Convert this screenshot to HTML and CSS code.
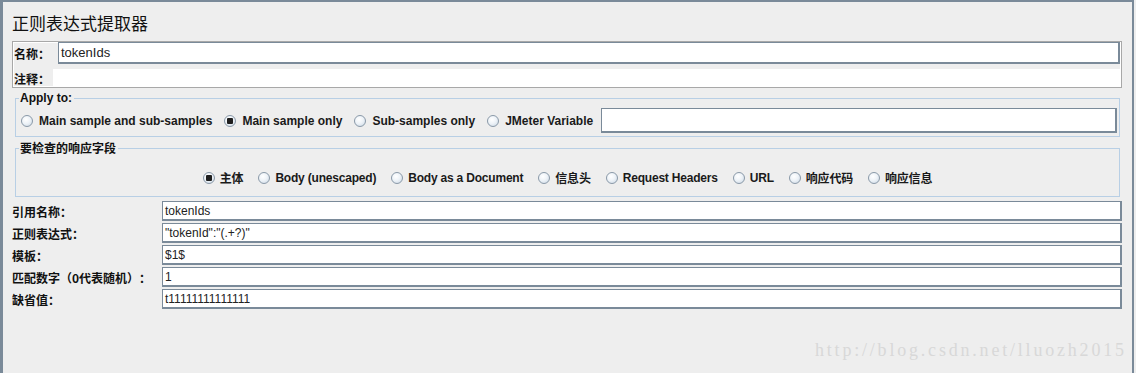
FILE: index.html
```html
<!DOCTYPE html>
<html lang="zh-CN">
<head>
    <meta charset="UTF-8">
    <title>正则表达式提取器</title>
    <link rel="stylesheet" href="styles.css">
</head>
<body>
    <div class="window">
        <div class="title">正则表达式提取器</div>

        <div class="name-box">
            <div class="name-row">
                <span class="label">名称：</span>
                <span class="field">tokenIds</span>
            </div>
            <div class="comment-row">
                <span class="label">注释：</span>
                <span class="blank"></span>
            </div>
        </div>

        <fieldset class="group apply">
            <legend>Apply to:</legend>
            <div class="radios">
                <label class="radio"><span class="dot"></span>Main sample and sub-samples</label>
                <label class="radio"><span class="dot on"></span>Main sample only</label>
                <label class="radio"><span class="dot"></span>Sub-samples only</label>
                <label class="radio"><span class="dot"></span>JMeter Variable</label>
                <span class="field var"></span>
            </div>
        </fieldset>

        <fieldset class="group response">
            <legend>要检查的响应字段</legend>
            <div class="radios centered">
                <label class="radio"><span class="dot on"></span>主体</label>
                <label class="radio"><span class="dot"></span>Body (unescaped)</label>
                <label class="radio"><span class="dot"></span>Body as a Document</label>
                <label class="radio"><span class="dot"></span>信息头</label>
                <label class="radio"><span class="dot"></span>Request Headers</label>
                <label class="radio"><span class="dot"></span>URL</label>
                <label class="radio"><span class="dot"></span>响应代码</label>
                <label class="radio"><span class="dot"></span>响应信息</label>
            </div>
        </fieldset>

        <div class="props">
            <span class="label">引用名称：</span>
            <span class="field">tokenIds</span>
            <span class="label">正则表达式：</span>
            <span class="field">"tokenId":"(.+?)"</span>
            <span class="label">模板：</span>
            <span class="field">$1$</span>
            <span class="label">匹配数字（0代表随机）：</span>
            <span class="field">1</span>
            <span class="label">缺省值：</span>
            <span class="field">t11111111111111</span>
        </div>

        <div class="watermark">http://blog.csdn.net/lluozh2015</div>
    </div>
</body>
</html>
```

FILE: styles.css
```css
body {
    margin: 0;
    background: #eeeeee;
    font-family: "Liberation Sans", Arial, "Noto Sans CJK SC", sans-serif;
    font-size: 12px;
    color: #222;
    text-spacing-trim: space-all;
}
.window {
    position: relative;
    box-sizing: border-box;
    width: 1134px;
    height: 373px;
    border-top: 2px solid #7a8a99;
    border-left: 3px solid #7a8a99;
    border-right: 2px solid #7a8a99;
    padding: 0 10px 0 9px;
}
.title {
    height: 39px;
    line-height: 42px;
    font-size: 17px;
    font-family: "Noto Sans CJK SC", sans-serif;
    color: #111;
}
/* name / comment box */
.name-box {
    box-sizing: border-box;
    height: 47px;
    border: 1px solid #a8a8a8;
    box-shadow: inset 0 0 0 1px #fff;
}
.label {
    font-family: "Noto Sans CJK SC", sans-serif;
    font-weight: bold;
    font-size: 12px;
    color: #111;
    white-space: nowrap;
}
.field {
    box-sizing: border-box;
    display: flex;
    align-items: center;
    background: #fff;
    border: 1px solid #7a8a99;
    border-right-width: 2px;
    border-bottom-width: 2px;
    padding-left: 2px;
    font-size: 12px;
    color: #222;
    white-space: pre;
}
.name-row {
    display: flex;
    align-items: center;
    height: 22px;
}
.name-row .label {
    width: 44px;
    padding-left: 1px;
}
.name-row .field {
    flex: 1;
    height: 22px;
    margin-right: 1px;
    font-size: 13px;
}
.comment-row {
    display: flex;
    align-items: center;
    height: 18px;
    margin-top: 5px;
}
.comment-row .label {
    width: 39px;
    padding-left: 1px;
}
.comment-row .blank {
    flex: 1;
    height: 18px;
    background: #fff;
}
/* titled groups */
.group {
    margin: 0 0 0 3px;
    width: 1105px;
    box-sizing: border-box;
    border: 1px solid #b8cfe5;
    min-width: 0;
}
.group legend {
    padding: 0 2px 0 1px;
    margin-left: -2px;
    font-weight: bold;
    font-size: 12px;
    line-height: 14px;
    color: #111;
}
.apply {
    margin-top: 3px;
    padding: 3px 2px 3px 5px;
}
.response {
    margin-top: 4px;
    padding: 14px 5px 10px;
}
.response legend {
    font-family: "Noto Sans CJK SC", sans-serif;
}
.radios {
    display: flex;
    align-items: center;
    gap: 12px;
}
.radios.centered {
    justify-content: center;
    gap: 15px;
}
.radio {
    display: flex;
    align-items: center;
    gap: 6px;
    font-weight: bold;
    color: #1a1a1a;
    white-space: nowrap;
    font-family: "Liberation Sans", Arial, "Noto Sans CJK SC", sans-serif;
}
.centered .radio {
    gap: 5px;
    letter-spacing: -0.2px;
}
.dot {
    box-sizing: border-box;
    width: 12px;
    height: 12px;
    border-radius: 50%;
    border: 1px solid #8a99a8;
    background: radial-gradient(circle at 40% 35%, #ffffff 0%, #eef3f8 45%, #c9d6e3 100%);
    display: flex;
    align-items: center;
    justify-content: center;
}
.dot.on::after {
    content: "";
    width: 6px;
    height: 6px;
    border-radius: 1px;
    background: #1e1e1e;
}
.field.var {
    flex: 1;
    height: 25px;
    margin-left: -4px;
}
/* property rows */
.props {
    display: grid;
    grid-template-columns: 150px 1fr;
    grid-auto-rows: 20px;
    row-gap: 2px;
    margin-top: 4px;
    align-items: center;
}
.props .field {
    height: 20px;
}
.watermark {
    position: absolute;
    left: 812px;
    top: 338px;
    font-family: "Liberation Serif", "Times New Roman", serif;
    font-size: 18px;
    letter-spacing: 2.8px;
    color: #d8d8d8;
}
```
